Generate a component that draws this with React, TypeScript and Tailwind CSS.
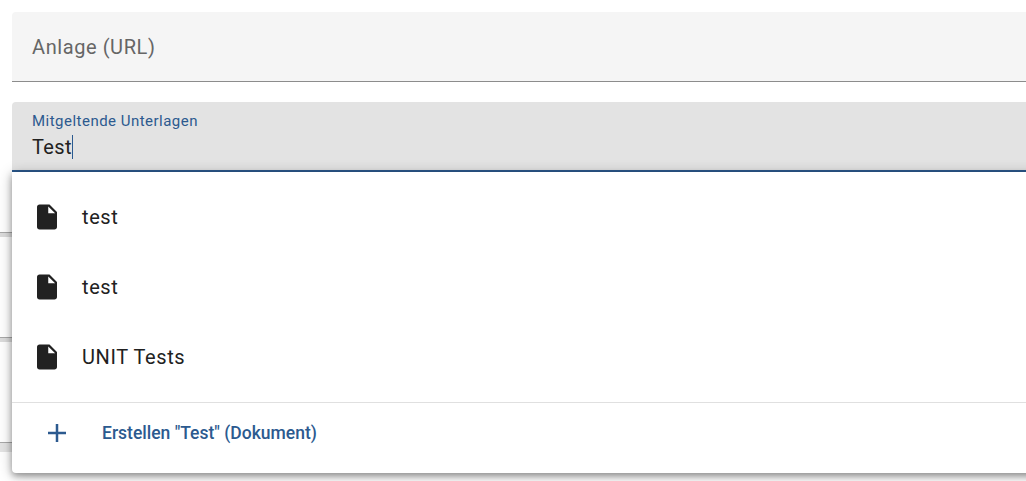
const FileIcon = () => (
  <svg width="30" height="30" viewBox="0 0 24 24" className="shrink-0" fill="#212121">
    <path d="M6 2c-1.1 0-1.99.9-1.99 2L4 20c0 1.1.89 2 1.99 2H18c1.1 0 2-.9 2-2V8l-6-6H6zm7 7V3.5L18.5 9H13z" />
  </svg>
);

const items = ["test", "test", "UNIT Tests"];

export default function App() {
  return (
    <div className="relative h-[481px] w-[1026px] overflow-hidden bg-white font-['Roboto',sans-serif]">
      <div className="w-[1050px] pl-3 pt-3">
        <div className="flex h-[70px] items-center rounded-t bg-[#f5f5f5] border-b border-[#8c8c8c] pl-5 pt-[1px]">
          <span className="text-[20px] tracking-[0.58px] text-[#666666]">Anlage (URL)</span>
        </div>
        <div className="mt-5 h-[70px] rounded-t bg-[#e3e3e3] border-b-2 border-[#2c5a8f] pl-5 pt-[10px]">
          <div className="text-[15px] leading-[18px] tracking-[0.48px] text-[#2c5a8f]">Mitgeltende Unterlagen</div>
          <div className="mt-[5px] flex items-center text-[20px] leading-[24px] tracking-[0.4px] text-[#212121]">
            Test
            <span className="h-[24px] w-px bg-[#2c5a8f]" />
          </div>
        </div>
      </div>

      {/* felder hinter dem dropdown, nur der linke rand ist sichtbar */}
      <div className="mt-[60px] h-[5px] border-t border-[#a8a8a8] bg-[#dcdcdc]" />
      <div className="mt-[100px] h-[5px] border-t border-[#a8a8a8] bg-[#dcdcdc]" />
      <div className="mt-[100px] h-[10px] border-t border-[#a8a8a8] bg-[#e4e4e4]" />

      <div className="absolute left-3 top-[172px] h-[301px] w-[1050px] rounded-b bg-white shadow-[0_3px_6px_rgba(0,0,0,0.3),0_2px_14px_rgba(0,0,0,0.28)]">
        <div className="flex h-[230px] flex-col pt-[10px]">
          {items.map((item, i) => (
            <div key={i} className="flex h-[70px] items-center pl-[20px]">
              <FileIcon />
              <span className="ml-[20px] text-[20px] tracking-[0.6px] text-[#212121]">{item}</span>
            </div>
          ))}
        </div>
        <div className="flex h-[71px] items-start border-t border-[#e0e0e0] pl-[33px] pt-[18px]">
          <svg width="24" height="24" viewBox="0 0 24 24" className="shrink-0">
            <path d="M12 3v18M3 12h18" stroke="#2c5a8f" strokeWidth="2.5" fill="none" />
          </svg>
          <span className="ml-[33px] text-[17.5px] leading-[24px] font-medium text-[#2c5a8f]">Erstellen "Test" (Dokument)</span>
        </div>
      </div>
    </div>
  );
}
